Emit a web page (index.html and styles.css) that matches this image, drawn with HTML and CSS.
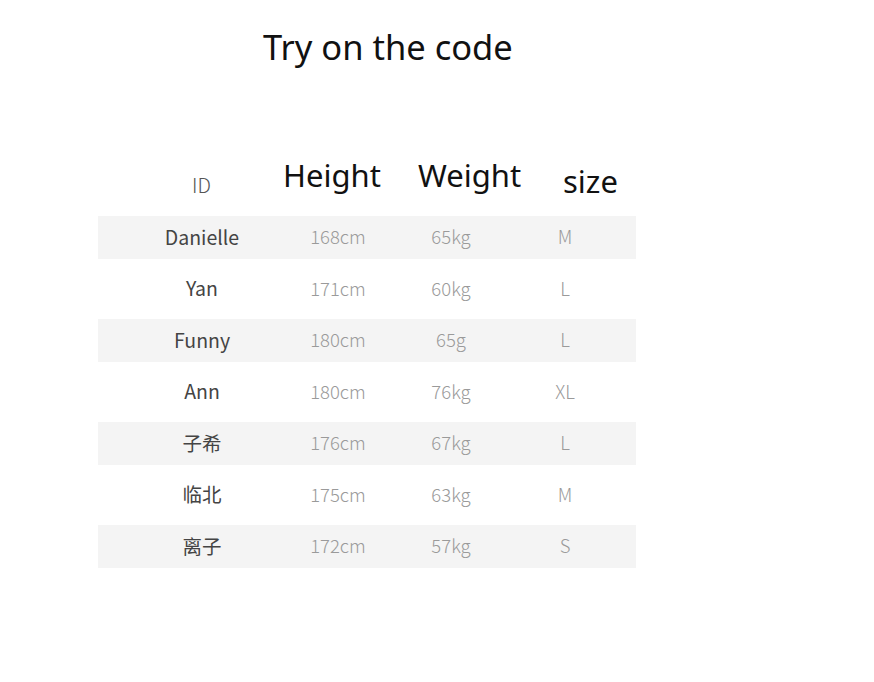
FILE: index.html
```html
<!DOCTYPE html>
<html lang="en">
<head>
<meta charset="utf-8">
<title>Try on the code</title>
<link rel="stylesheet" href="styles.css">
</head>
<body>
<div class="page">
  <h1 class="title">Try on the code</h1>
  <div class="table">
    <div class="head">
      <div class="h h-id">ID</div>
      <div class="h h-height">Height</div>
      <div class="h h-weight">Weight</div>
      <div class="h h-size">size</div>
    </div>
    <div class="row shaded"><span class="name">Danielle</span><span>168cm</span><span>65kg</span><span>M</span></div>
    <div class="row"><span class="name">Yan</span><span>171cm</span><span>60kg</span><span>L</span></div>
    <div class="row shaded"><span class="name">Funny</span><span>180cm</span><span>65g</span><span>L</span></div>
    <div class="row"><span class="name">Ann</span><span>180cm</span><span>76kg</span><span>XL</span></div>
    <div class="row shaded"><span class="name">子希</span><span>176cm</span><span>67kg</span><span>L</span></div>
    <div class="row"><span class="name">临北</span><span>175cm</span><span>63kg</span><span>M</span></div>
    <div class="row shaded"><span class="name">离子</span><span>172cm</span><span>57kg</span><span>S</span></div>
  </div>
</div>
</body>
</html>
```
FILE: styles.css
```css
html, body {
  margin: 0;
  padding: 0;
  background: #ffffff;
}
.page {
  width: 874px;
  height: 682px;
  font-family: "Noto Sans", "Noto Sans CJK SC", sans-serif;
}
.title {
  margin: 0;
  padding: 23px 0 0 263px;
  font-size: 34.5px;
  font-weight: 400;
  line-height: 48px;
  color: #111;
}
.table {
  margin: 84px 0 0 98px;
  width: 538px;
  display: flex;
  flex-direction: column;
  gap: 8.5px;
}
.head {
  display: flex;
  height: 48px;
  align-items: flex-start;
  margin-bottom: 4px;
}
.h {
  color: #111;
  font-size: 31px;
  line-height: 40px;
}
.h-id {
  width: 95px;
  margin-left: 94px;
  font-family: "Noto Sans CJK SC", sans-serif;
  font-weight: 300;
  font-size: 20px;
  color: #555;
  margin-top: 17px;
  line-height: 26px;
}
.h-height {
  width: 135px;
  margin-left: -4px;
}
.h-weight {
  width: 145px;
}
.h-size {
  margin-top: 6px;
}
.row {
  display: grid;
  grid-template-columns: 208px 64px 162px 66px 1fr;
  height: 43px;
  align-items: center;
  font-family: "Noto Sans CJK SC", sans-serif;
  font-weight: 300;
  font-size: 18.5px;
  color: #9a9a9a;
}
.row span {
  text-align: center;
  white-space: nowrap;
  padding-bottom: 2px;
}
.row .name {
  color: #444;
  font-weight: 400;
  font-size: 19.5px;
}
.shaded {
  background: #f4f4f4;
}
```
